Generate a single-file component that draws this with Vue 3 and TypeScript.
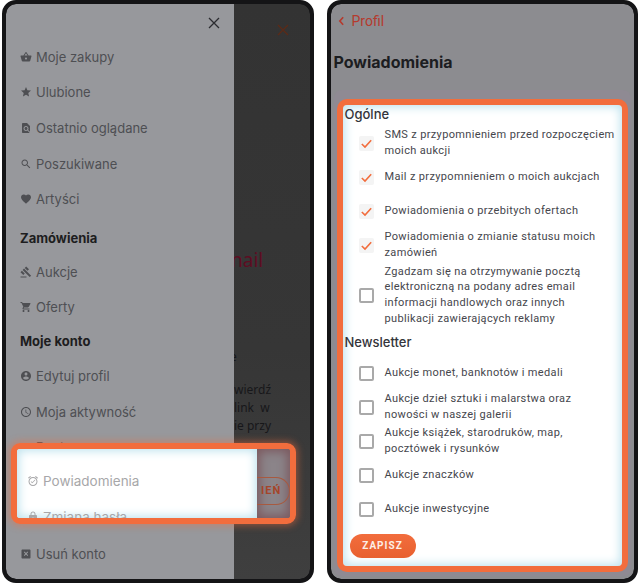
<template>
  <div class="page">
    <!-- lewy telefon: menu konta -->
    <section class="phone">
      <div class="screen split">
        <nav class="menu">
          <div class="menu-top">
            <svg class="close" viewBox="0 0 12 12"><path d="M1 1l10 10M11 1L1 11" /></svg>
          </div>
          <a v-for="item in shopItems" :key="item.text" class="menu-item">
            <svg class="ico" viewBox="0 0 24 24"><path :d="item.icon" /></svg>
            <span>{{ item.text }}</span>
          </a>
          <h3 class="menu-head first">Zamówienia</h3>
          <a v-for="item in orderItems" :key="item.text" class="menu-item">
            <svg class="ico" viewBox="0 0 24 24"><path :d="item.icon" /></svg>
            <span>{{ item.text }}</span>
          </a>
          <h3 class="menu-head">Moje konto</h3>
          <a v-for="item in accountItems" :key="item.text" class="menu-item">
            <svg class="ico" viewBox="0 0 24 24"><path :d="item.icon" /></svg>
            <span>{{ item.text }}</span>
          </a>
          <div class="menu-gap"></div>
          <a class="menu-item">
            <svg class="ico" viewBox="0 0 24 24"><path :d="icons.remove" /></svg>
            <span>Usuń konto</span>
          </a>
        </nav>
        <aside class="behind">
          <svg class="behind-x" viewBox="0 0 12 12"><path d="M1 1l10 10M11 1L1 11" /></svg>
          <div class="behind-title">nail</div>
          <div class="behind-line one">e</div>
          <div class="behind-line two">wierdź</div>
          <div class="behind-line">link&nbsp;&nbsp;w</div>
          <div class="behind-line">ie przy</div>
        </aside>
      </div>
      <div class="spot">
        <div class="spot-menu">
          <div class="spot-row main">
            <svg class="ico alarm" viewBox="0 0 24 24"><path :d="icons.alarm" /></svg>
            <span>Powiadomienia</span>
          </div>
          <div class="spot-row">
            <svg class="ico lock" viewBox="0 0 24 24"><path :d="icons.lock" /></svg>
            <span>Zmiana hasła</span>
          </div>
        </div>
        <div class="spot-rest">
          <div class="spot-btn">IEŃ</div>
        </div>
      </div>
    </section>

    <!-- prawy telefon: ustawienia powiadomień -->
    <section class="phone second">
      <div class="screen settings">
        <a class="back">
          <svg class="chevron" viewBox="0 0 8 12"><path d="M6 1.5L2 6l4 4.5" /></svg>
          <span>Profil</span>
        </a>
        <h1 class="title">Powiadomienia</h1>
        <div class="card">
          <form class="form" @submit.prevent>
            <h2 class="group">Ogólne</h2>
            <label v-for="row in general" :key="row.text" class="row" :class="{ tall: row.tall }">
              <span class="box" :class="{ checked: row.checked }">
                <svg v-if="row.checked" viewBox="0 0 16 16"><path d="M3 8.5l3.4 3.3L13 4.6" /></svg>
              </span>
              <span class="label">{{ row.text }}</span>
            </label>
            <h2 class="group news">Newsletter</h2>
            <label v-for="row in newsletter" :key="row.text" class="row">
              <span class="box"></span>
              <span class="label">{{ row.text }}</span>
            </label>
            <button class="save" type="submit">ZAPISZ</button>
          </form>
        </div>
      </div>
    </section>
  </div>
</template>

<script setup lang="ts">
interface MenuEntry {
  text: string
  icon: string
}

interface CheckRow {
  text: string
  checked?: boolean
  tall?: boolean
}

const icons = {
  basket: 'M17.21 9l-4.38-6.56c-.19-.28-.51-.42-.83-.42-.32 0-.64.14-.83.43L6.79 9H2c-.55 0-1 .45-1 1 0 .09.01.18.04.27l2.54 9.27c.23.84 1 1.46 1.92 1.46h13c.92 0 1.69-.62 1.93-1.46l2.54-9.27L23 10c0-.55-.45-1-1-1h-4.79zM9 9l3-4.4L15 9H9zm3 8c-1.1 0-2-.9-2-2s.9-2 2-2 2 .9 2 2-.9 2-2 2z',
  star: 'M12 17.27L18.18 21l-1.64-7.03L22 9.24l-7.19-.61L12 2 9.19 8.63 2 9.24l5.46 4.73L5.82 21z',
  viewed: 'M20 19.59V8l-6-6H6c-1.1 0-1.99.9-1.99 2L4 20c0 1.1.89 2 1.99 2H18c.45 0 .85-.15 1.19-.4l-4.43-4.43c-.8.52-1.74.83-2.76.83-2.76 0-5-2.24-5-5s2.24-5 5-5 5 2.24 5 5c0 1.02-.31 1.96-.83 2.75L20 19.59zM9 13c0 1.66 1.34 3 3 3s3-1.34 3-3-1.34-3-3-3-3 1.34-3 3z',
  search: 'M15.5 14h-.79l-.28-.27C15.41 12.59 16 11.11 16 9.5 16 5.91 13.09 3 9.5 3S3 5.91 3 9.5 5.91 16 9.5 16c1.61 0 3.09-.59 4.23-1.57l.27.28v.79l5 4.99L20.49 19l-4.99-5zm-6 0C7.01 14 5 11.99 5 9.5S7.01 5 9.5 5 14 7.01 14 9.5 11.99 14 9.5 14z',
  heart: 'M12 21.35l-1.45-1.32C5.4 15.36 2 12.28 2 8.5 2 5.42 4.42 3 7.5 3c1.74 0 3.41.81 4.5 2.09C13.09 3.81 14.76 3 16.5 3 19.58 3 22 5.42 22 8.5c0 3.78-3.4 6.86-8.55 11.54L12 21.35z',
  gavel: 'M1 21h12v2H1zM5.245 8.07l2.83-2.827 14.14 14.142-2.828 2.828zM12.317 1l5.657 5.656-2.83 2.83-5.654-5.66zM3.825 9.485l5.657 5.657-2.828 2.828-5.657-5.657z',
  cart: 'M7 18c-1.1 0-1.99.9-1.99 2S5.9 22 7 22s2-.9 2-2-.9-2-2-2zM1 2v2h2l3.6 7.59-1.35 2.45c-.16.28-.25.61-.25.96 0 1.1.9 2 2 2h12v-2H7.42c-.14 0-.25-.11-.25-.25l.03-.12.9-1.63h7.45c.75 0 1.41-.41 1.75-1.03l3.58-6.49c.08-.14.12-.31.12-.48 0-.55-.45-1-1-1H5.21l-.94-2H1zm16 16c-1.1 0-1.99.9-1.99 2s.89 2 1.99 2 2-.9 2-2-.9-2-2-2z',
  user: 'M12 2C6.48 2 2 6.48 2 12s4.48 10 10 10 10-4.48 10-10S17.52 2 12 2zm0 3c1.66 0 3 1.34 3 3s-1.34 3-3 3-3-1.34-3-3 1.34-3 3-3zm0 14.2c-2.5 0-4.71-1.28-6-3.22.03-1.99 4-3.08 6-3.08 1.99 0 5.97 1.09 6 3.08-1.29 1.94-3.5 3.22-6 3.22z',
  clock: 'M11.99 2C6.47 2 2 6.48 2 12s4.47 10 9.99 10C17.52 22 22 17.52 22 12S17.52 2 11.99 2zM12 20c-4.42 0-8-3.58-8-8s3.58-8 8-8 8 3.58 8 8-3.58 8-8 8zm.5-13H11v6l5.25 3.15.75-1.23-4.5-2.67z',
  truck: 'M20 8h-3V4H3c-1.1 0-2 .9-2 2v11h2c0 1.66 1.34 3 3 3s3-1.34 3-3h6c0 1.66 1.34 3 3 3s3-1.34 3-3h2v-5l-3-4z',
  alarm: 'M22 5.72l-4.6-3.86-1.29 1.53 4.6 3.86L22 5.72zM7.88 3.39L6.6 1.86 2 5.71l1.29 1.53 4.59-3.85zM12 4c-4.97 0-9 4.03-9 9s4.02 9 9 9c4.97 0 9-4.03 9-9s-4.03-9-9-9zm0 16c-3.87 0-7-3.13-7-7s3.13-7 7-7 7 3.13 7 7-3.13 7-7 7zM10.54 14.53L8.41 12.4l-1.06 1.06 3.18 3.18 6-6-1.06-1.06z',
  lock: 'M18 8h-1V6c0-2.76-2.24-5-5-5S7 3.24 7 6v2H6c-1.1 0-2 .9-2 2v10c0 1.1.9 2 2 2h12c1.1 0 2-.9 2-2V10c0-1.1-.9-2-2-2zm-6 9c-1.1 0-2-.9-2-2s.9-2 2-2 2 .9 2 2-.9 2-2 2zm3.1-9H8.9V6c0-1.71 1.39-3.1 3.1-3.1 1.71 0 3.1 1.39 3.1 3.1v2z',
  remove: 'M19 3H5c-1.1 0-2 .9-2 2v14c0 1.1.9 2 2 2h14c1.1 0 2-.9 2-2V5c0-1.1-.9-2-2-2zm-2.6 11.6L15 16l-3-3-3 3-1.4-1.4 3-3-3-3L9 7.2l3 3 3-3 1.4 1.4-3 3 3 3z'
}

const shopItems: MenuEntry[] = [
  { text: 'Moje zakupy', icon: icons.basket },
  { text: 'Ulubione', icon: icons.star },
  { text: 'Ostatnio oglądane', icon: icons.viewed },
  { text: 'Poszukiwane', icon: icons.search },
  { text: 'Artyści', icon: icons.heart }
]

const orderItems: MenuEntry[] = [
  { text: 'Aukcje', icon: icons.gavel },
  { text: 'Oferty', icon: icons.cart }
]

const accountItems: MenuEntry[] = [
  { text: 'Edytuj profil', icon: icons.user },
  { text: 'Moja aktywność', icon: icons.clock },
  { text: 'Dostawa', icon: icons.truck }
]

const general: CheckRow[] = [
  { text: 'SMS z przypomnieniem przed rozpoczęciem moich aukcji', checked: true },
  { text: 'Mail z przypomnieniem o moich aukcjach', checked: true },
  { text: 'Powiadomienia o przebitych ofertach', checked: true },
  { text: 'Powiadomienia o zmianie statusu moich zamówień', checked: true },
  { text: 'Zgadzam się na otrzymywanie pocztą elektroniczną na podany adres email informacji handlowych oraz innych publikacji zawierających reklamy', tall: true }
]

const newsletter: CheckRow[] = [
  { text: 'Aukcje monet, banknotów i medali' },
  { text: 'Aukcje dzieł sztuki i malarstwa oraz nowości w naszej galerii' },
  { text: 'Aukcje książek, starodruków, map, pocztówek i rysunków' },
  { text: 'Aukcje znaczków' },
  { text: 'Aukcje inwestycyjne' }
]
</script>

<style scoped>
.page {
  display: flex;
  gap: 13px;
  width: 639px;
  height: 585px;
  padding: 0 1px 2px 2px;
  box-sizing: border-box;
  background: #fff;
}

.phone {
  position: relative;
  flex: 1;
  border: 4px solid #141416;
  border-radius: 14px;
  overflow: hidden;
  background: #141416;
}

.screen {
  height: 100%;
  border-radius: 10px;
  overflow: hidden;
}

.split {
  display: flex;
}

.menu {
  width: 228px;
  flex: none;
  padding-left: 14px;
  box-sizing: border-box;
  background: #97989c;
  color: #4e4f53;
  font-family: Inter, "Noto Sans", sans-serif;
}

.menu-top {
  display: flex;
  justify-content: flex-end;
  height: 22px;
  padding: 13px 14px 0 0;
}

.close {
  width: 12px;
  height: 12px;
  fill: none;
  stroke: #2b2c30;
  stroke-width: 1.3;
}

.menu-item {
  display: flex;
  align-items: center;
  gap: 4px;
  height: 35.6px;
  font-size: 13px;
}

.ico {
  width: 12px;
  height: 12px;
  flex: none;
  fill: currentColor;
}

.menu-head {
  margin: 0;
  height: 26px;
  padding-top: 7px;
  font-size: 13px;
  line-height: 18px;
  font-weight: 700;
  color: #1d1d20;
}

.menu-head.first {
  margin-top: 5px;
}

.menu-head.first + .menu-item {
  margin-top: -1px;
}

.menu-gap {
  height: 71px;
}

.behind {
  position: relative;
  flex: 1;
  background: linear-gradient(#333 0, #363636 60%, #3f3f3f 100%);
  color: #17171a;
  font-family: "Noto Sans", Inter, sans-serif;
  overflow: hidden;
}

.behind-x {
  position: absolute;
  top: 20px;
  left: 43px;
  width: 12px;
  height: 12px;
  fill: none;
  stroke: #5b2a17;
  stroke-width: 1.4;
}

.behind-title {
  margin-top: 241px;
  margin-left: -3px;
  height: 30px;
  line-height: 30px;
  font-size: 19px;
  color: #5e0c22;
}

.behind-line {
  height: 18px;
  line-height: 18px;
  font-size: 12px;
}

.behind-line.one {
  margin-top: 73px;
  margin-left: -4px;
}

.behind-line.two {
  margin-top: 15px;
}

.spot {
  position: absolute;
  left: 5px;
  top: 439px;
  width: 285px;
  height: 81px;
  box-sizing: border-box;
  display: flex;
  border: 6px solid #f26d3d;
  border-radius: 9px;
  overflow: hidden;
  box-shadow: 0 0 7px 2px rgba(242, 109, 61, 0.45);
  font-family: Inter, "Noto Sans", sans-serif;
}

.spot-menu {
  position: relative;
  width: 240px;
  flex: none;
  background: #fff;
  box-shadow: inset 0 0 10px 2px #bfe3ee;
  color: #a7a7a9;
  overflow: hidden;
  font-size: 13.5px;
}

.spot-row {
  display: flex;
  align-items: center;
  gap: 4px;
  height: 36px;
  padding-left: 10px;
}

.spot-row.main {
  margin-top: 14px;
}

.spot-rest {
  flex: 1;
  display: flex;
  align-items: center;
  background: #8b8489;
  box-shadow: inset 0 0 10px 3px #7c5a60;
}

.spot-btn {
  width: 100%;
  height: 28px;
  margin-top: 14px;
  padding-left: 4px;
  box-sizing: border-box;
  border: 1px solid #a8593f;
  border-left: none;
  border-radius: 0 14px 14px 0;
  font: 700 11px/26px Roboto, sans-serif;
  letter-spacing: 1px;
  color: #a5452a;
}

.settings {
  background: #8c8c90;
  font-family: Roboto, "Liberation Sans", sans-serif;
  padding-top: 9px;
  box-sizing: border-box;
}

.back {
  display: flex;
  align-items: center;
  gap: 7px;
  height: 16px;
  padding-left: 7px;
  font-size: 14px;
  color: #b53a2e;
}

.chevron {
  width: 7px;
  height: 10px;
  fill: none;
  stroke: #b53a2e;
  stroke-width: 2;
}

.title {
  margin: 21px 0 0 3px;
  height: 24px;
  line-height: 24px;
  font: 700 16px/24px Inter, sans-serif;
  color: #1c1d21;
}

.card {
  margin: 16px 3px 0;
  height: 486px;
  padding: 9px 3px 0;
  box-sizing: border-box;
  background: #8f8a93;
  border-radius: 8px;
}

.form {
  height: 473px;
  box-sizing: border-box;
  padding: 1px 5px 0 2px;
  border: 6px solid #f26d3d;
  border-radius: 10px;
  background: #fff;
  box-shadow: inset 0 0 10px 2px #bfe3ee;
}

.group {
  margin: 0;
  height: 20px;
  line-height: 17px;
  font: 500 13px/17px Inter, sans-serif;
  color: #33343a;
}

.group.news {
  height: 28px;
  line-height: 28px;
}

.row {
  display: flex;
  align-items: center;
  min-height: 34px;
  padding-left: 14px;
}

.row.tall {
  min-height: 66px;
}

.box {
  width: 15px;
  height: 15px;
  flex: none;
  box-sizing: border-box;
  border: 2px solid #a9a9a9;
  border-radius: 2px;
  margin-right: 11px;
}

.box.checked {
  border: none;
  background: #f4f4f4;
}

.box svg {
  display: block;
  width: 15px;
  height: 15px;
  fill: none;
  stroke: #f26d3d;
  stroke-width: 1.7;
}

.label {
  font-size: 11px;
  line-height: 15.7px;
  letter-spacing: 0.35px;
  color: #45464c;
}

.save {
  display: block;
  margin: 8px 0 0 5px;
  width: 66px;
  height: 24px;
  border: none;
  border-radius: 12px;
  background: linear-gradient(#f26d3d, #e8602f);
  color: #fdeee6;
  font: 700 10px/24px Roboto, sans-serif;
  letter-spacing: 1px;
  padding: 0;
}
</style>

<style>
html,
body {
  margin: 0;
  background: #fff;
}
</style>
